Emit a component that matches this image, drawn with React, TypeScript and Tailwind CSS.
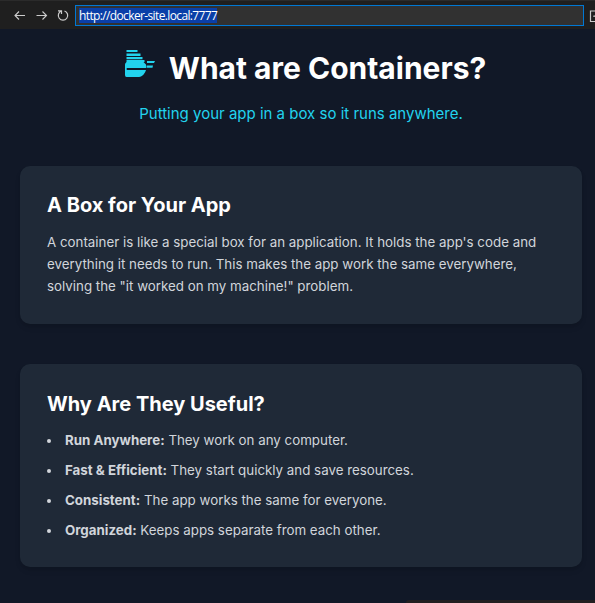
import React from "react";

const points = [
  { name: "Run Anywhere:", text: "They work on any computer." },
  { name: "Fast & Efficient:", text: "They start quickly and save resources." },
  { name: "Consistent:", text: "The app works the same for everyone." },
  { name: "Organized:", text: "Keeps apps separate from each other." },
];

function Toolbar() {
  return (
    <div className="flex h-[29px] shrink-0 items-center overflow-hidden border-t border-[#2b2b2b] bg-[#1f1f1f] pt-px pl-[13px]">
      <svg className="mr-2 h-[14px] w-[14px] shrink-0" viewBox="0 0 14 14" fill="none" stroke="#cccccc" strokeWidth="1.1">
        <path d="M12 6.500H2M6 2.500l-4 4 4 4" />
      </svg>
      <svg className="mr-2 h-[14px] w-[14px] shrink-0" viewBox="0 0 14 14" fill="none" stroke="#cccccc" strokeWidth="1.1">
        <path d="M1.500 6.500H11.500M7.500 2.500l4 4-4 4" />
      </svg>
      <svg className="mr-[5px] h-[14px] w-[13px] shrink-0" viewBox="0 0 13 14" fill="none" stroke="#cccccc" strokeWidth="1.2">
        <path d="M1 1.800H4.500V5M4.500 2A4.700 4.700 0 1 0 7.500 2" />
      </svg>
      <div className="flex h-[21px] w-[509px] shrink-0 items-center border border-[#0078d4] bg-[#313131] pl-[3px] font-['Open_Sans',sans-serif] text-[12px]">
        <span className="flex h-[15px] w-[138px] items-center bg-[#0a3fa8] tracking-[-0.63px] whitespace-nowrap text-white">http://docker-site.local:7777</span>
      </div>
      <svg className="ml-[5px] h-[14px] w-[14px] shrink-0" viewBox="0 0 14 14" fill="none" stroke="#cccccc" strokeWidth="1.200">
        <path d="M6 2H1.500v10.500H12M5 8V7h7" />
      </svg>
    </div>
  );
}

function ShipIcon() {
  return (
    <svg className="h-[30px] w-[32px] shrink-0" viewBox="0 0 32 30" fill="#22d3ee">
      <path d="M2.500 1h11v2h-11zM2.500 4.600h14v2.400h-14zM2.500 8h16v2.200h-16zM2.500 11h18v2h-18z" />
      <path d="M2.500 13h17l2.500 2.500v3.500H2.700v2H22c-1 3.500-3.500 6.500-7 7H2.500Q1 28 1 26V15.500q0-1.500 1.500-2.500z" />
      <path d="M23 12h8l-1 2h-7zM22.500 16.500h6.500l-.5 2.300h-6z" />
    </svg>
  );
}

export default function App() {
  return (
    <div className="flex h-[603px] w-[595px] flex-col overflow-hidden bg-[#111827] font-['Inter',sans-serif] text-[#d1d5db]">
      <Toolbar />
      <main className="flex flex-1 flex-col pr-[13px] pl-5">
        <header className="mb-[40px] flex h-[97px] flex-col items-center pt-[20px]">
          <h1 className="flex items-start gap-[13px] pl-[8px] text-[30px] leading-[38px] font-bold text-white">
            <ShipIcon />
            <span>What are Containers?</span>
          </h1>
          <p className="mt-[15px] text-[15px] leading-[24px] text-[#22d3ee]">Putting your app in a box so it runs anywhere.</p>
        </header>
        <section className="mb-[40px] h-[158px] shrink-0 rounded-[10px] bg-[#1f2937] px-[27px] pt-[26px] shadow-md">
          <h2 className="mb-[12px] text-[20px] leading-[27px] font-bold text-white">A Box for Your App</h2>
          <p className="text-[13.333px] leading-[22px]">
            A container is like a special box for an application. It holds the app's code and<br />
            everything it needs to run. This makes the app work the same everywhere,<br />
            solving the "it worked on my machine!" problem.
          </p>
        </section>
        <section className="h-[203px] shrink-0 rounded-[10px] bg-[#1f2937] px-[27px] pt-[27px] shadow-md">
          <h2 className="mb-[11px] text-[20px] leading-[27px] font-bold text-white">Why Are They Useful?</h2>
          <ul className="flex flex-col gap-2 text-[13.333px] leading-[22px]">
            {points.map((point) => (
              <li key={point.name} className="flex items-center gap-[14px]">
                <span className="mt-px h-1 w-1 rounded-full bg-[#d1d5db]" />
                <span>
                  <strong>{point.name}</strong> {point.text}
                </span>
              </li>
            ))}
          </ul>
        </section>
      </main>
      <div className="ml-[406px] h-[3px] shrink-0 rounded-tl-[3px] bg-[#221e20]" />
    </div>
  );
}
